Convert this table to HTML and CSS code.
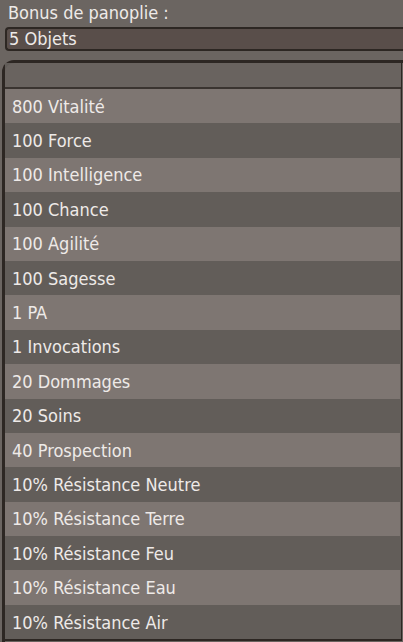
FILE: index.html
```html
<!DOCTYPE html>
<html lang="fr">
<head>
<meta charset="utf-8">
<link rel="stylesheet" href="styles.css">
</head>
<body>
<div class="title">Bonus de panoplie :</div>
<div class="select">5 Objets</div>
<div class="box">
  <div class="inner">
    <div class="head"></div>
    <div class="list">
      <div class="row light">800 Vitalité</div>
      <div class="row dark">100 Force</div>
      <div class="row light">100 Intelligence</div>
      <div class="row dark">100 Chance</div>
      <div class="row light">100 Agilité</div>
      <div class="row dark">100 Sagesse</div>
      <div class="row light">1 PA</div>
      <div class="row dark">1 Invocations</div>
      <div class="row light">20 Dommages</div>
      <div class="row dark">20 Soins</div>
      <div class="row light">40 Prospection</div>
      <div class="row dark">10% Résistance Neutre</div>
      <div class="row light">10% Résistance Terre</div>
      <div class="row dark">10% Résistance Feu</div>
      <div class="row light">10% Résistance Eau</div>
      <div class="row dark">10% Résistance Air</div>
    </div>
  </div>
</div>
</body>
</html>
```
FILE: styles.css
```css
html, body {
  margin: 0;
  padding: 0;
}
body {
  width: 403px;
  height: 642px;
  overflow: hidden;
  background: #6b6561;
  font-family: "DejaVu Sans Condensed", "DejaVu Sans", sans-serif;
  font-stretch: condensed;
  font-size: 18px;
  color: #eeeae8;
}
.title {
  padding: 3px 0 0 8px;
  line-height: 19px;
  height: 19px;
}
.select {
  margin: 5px 0 0 5px;
  line-height: 20px;
  padding: 0 0 0 2px;
  height: 20px;
  background: #594e4a;
  border: 2px solid #2d2723;
  border-right: none;
  border-radius: 4px 0 0 4px;
}
.box {
  margin: 9px 0 0 2px;
  border-top: 3px solid #2d2723;
  border-left: 3px solid #2d2723;
  border-top-left-radius: 12px;
  background: #69635f;
  height: 600px;
}
.inner {
  margin-right: 1px;
  border-right: 1px solid #2d2723;
  background: #625d59;
}
.head {
  height: 24px;
  background: #69635f;
  border-bottom: 2px solid #3a3430;
  border-top-left-radius: 9px;
}
.list {
  display: flex;
  flex-direction: column;
  border-bottom: 2px solid #2d2723;
}
.row {
  height: 34.4px;
  display: flex;
  align-items: center;
  padding-left: 7px;
  margin-right: 1px;
}
.light {
  background: #7e7672;
}
.dark {
  background: #625d59;
}
```
